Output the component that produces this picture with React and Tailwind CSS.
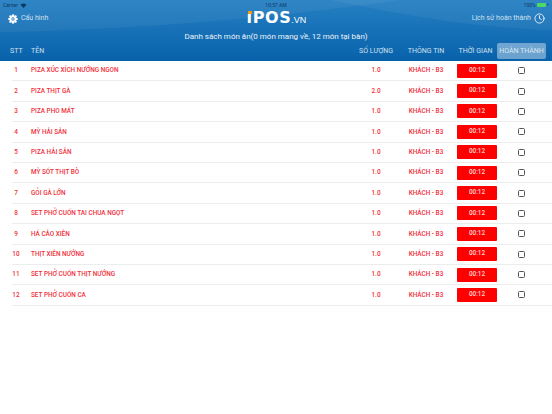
import React from 'react';
import { Clock } from 'lucide-react';

const mons = [
  'PIZA XÚC XÍCH NƯỚNG NGON',
  'PIZA THỊT GÀ',
  'PIZA PHO MÁT',
  'MỲ HẢI SẢN',
  'PIZA HẢI SẢN',
  'MỲ SỐT THỊT BÒ',
  'GỎI GÀ LỚN',
  'SET PHỞ CUỐN TAI CHUA NGỌT',
  'HÁ CẢO XIÊN',
  'THỊT XIÊN NƯỚNG',
  'SET PHỞ CUỐN THỊT NƯỚNG',
  'SET PHỞ CUỐN CA',
];

// banh rang kieu hoa, 8 canh
function GearIcon() {
  return (
    <svg width="10" height="10" viewBox="0 0 24 24" fill="#fff">
      {[0, 45, 90, 135, 180, 225, 270, 315].map((a) => (
        <circle key={a} cx="12" cy="3.4" r="3" transform={`rotate(${a} 12 12)`} />
      ))}
      <circle cx="12" cy="12" r="7.5" />
      <circle cx="12" cy="12" r="4" fill="#3f8ac6" />
      <circle cx="12" cy="12" r="1.6" fill="#fff" />
    </svg>
  );
}

export default function App() {
  return (
    <div className="w-[552px] h-[414px] bg-white overflow-hidden font-['Roboto',sans-serif]">
      {/* HEADER */}
      <header className="relative h-[61px] bg-gradient-to-b from-[#2580c2] to-[#0762ab] text-white overflow-hidden">
        <svg className="absolute inset-0" width="552" height="61" viewBox="0 0 552 61" fill="none">
          <path d="M0 32 C120 30 260 20 400 0 L0 0 Z" fill="#ffffff" fillOpacity="0.05" />
          <path d="M330 0 C400 14 470 28 552 30 L552 0 Z" fill="#ffffff" fillOpacity="0.05" />
        </svg>

        <div className="relative flex items-center justify-between h-[7px] px-[3px] pt-[3px] text-[5px] leading-none">
          <div className="flex items-center gap-[2px] w-[60px] text-[#0b3a63]">
            <span>Carrier</span>
            <svg width="7" height="5" viewBox="0 0 12 10"><path d="M6 10L0 3.5C3.5 0 8.5 0 12 3.5Z" fill="#0b3a63" /></svg>
          </div>
          <span className="text-[#0b3a63]">10:57 AM</span>
          <div className="flex items-center justify-end gap-[1px] w-[60px] text-[#0b3a63]">
            <span>100%</span>
            <span className="w-[9px] h-[4px] bg-[#4cd964] rounded-[1px]" />
            <span className="text-[4px]">+</span>
          </div>
        </div>

        <div className="relative flex items-center justify-between h-[23px] pl-[8px] pr-[7px]">
          <div className="flex items-center gap-[3px] w-[120px] text-[7px] text-[#cfe0ee]">
            <GearIcon />
            <span>Cấu hình</span>
          </div>
          <div className="relative flex items-baseline text-white leading-none -mt-[1px]">
            <span className="absolute left-[1px] top-[1px] w-[4px] h-[3px] bg-[#f39a1e]" />
            <span className="text-[16px] font-bold font-['DejaVu_Sans',sans-serif] tracking-[0.6px]">ıPOS</span>
            <span className="text-[9px] font-['Liberation_Sans',sans-serif]">.VN</span>
          </div>
          <div className="flex items-center justify-end gap-[3px] w-[120px] text-[7px] text-[#cfe0ee]">
            <span>Lịch sử hoàn thành</span>
            <Clock size={11} strokeWidth={1.8} color="#fff" />
          </div>
        </div>

        <p className="relative text-center text-[8px] leading-[12px] mt-[1px] text-[#eaf3fa]">
          Danh sách món ăn(0 món mang về, 12 món tại bàn)
        </p>

        <div className="relative flex items-center h-[14px] mt-[1px] pl-[10px] pr-[6px] text-[7px] text-[#cfe0ee]">
          <span className="w-[21px]">STT</span>
          <span className="flex-1">TÊN</span>
          <span className="w-[50px] text-center whitespace-nowrap">SỐ LƯỢNG</span>
          <span className="w-[50px] text-center whitespace-nowrap">THÔNG TIN</span>
          <span className="w-[46px] pl-[3px] text-center whitespace-nowrap">THỜI GIAN</span>
          <span className="w-[49px] h-[16px] flex items-center justify-center bg-white/40 rounded-[2px] whitespace-nowrap text-[#d9e8f4]">HOÀN THÀNH</span>
        </div>
      </header>

      {/* DANH SÁCH */}
      <div className="pl-[12px]">
        {mons.map((ten, i) => (
          <div key={i} className="flex items-center h-[20.4px] pr-[7px] border-b border-[#ececec] text-[6.4px] font-medium text-[#f0303a]">
            <span className="w-[8px] text-center pt-[1px]">{i + 1}</span>
            <span className="flex-1 pl-[11px] pt-[1px]">{ten}</span>
            <span className="w-[50px] text-center pt-[1px]">{i === 1 ? '2.0' : '1.0'}</span>
            <span className="w-[50px] text-center pt-[1px]">KHÁCH - B3</span>
            <span className="w-[40px] h-[14px] ml-[6px] flex items-center justify-center bg-[#ff0000] text-[#ffd6d6] rounded-[1px]">00:12</span>
            <span className="w-[48px] flex justify-center">
              <span className="w-[7px] h-[7px] border-[1.2px] border-[#555] rounded-[1.5px]" />
            </span>
          </div>
        ))}
      </div>
    </div>
  );
}
